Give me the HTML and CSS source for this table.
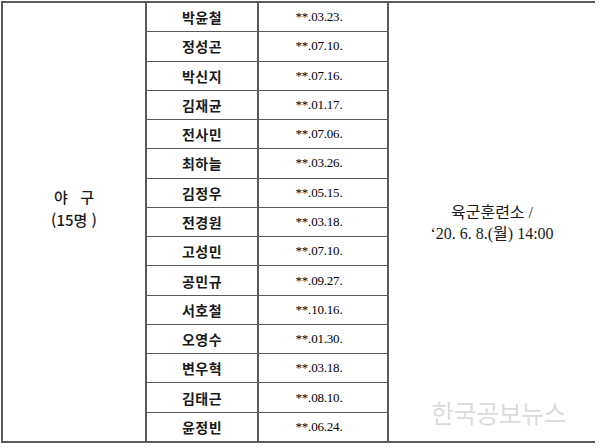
FILE: index.html
```html
<!DOCTYPE html>
<html lang="ko">
<head>
<meta charset="utf-8">
<link rel="stylesheet" href="styles.css">
</head>
<body>
<div class="table">
  <div class="cell sport">야&nbsp;&nbsp;&nbsp;구<br>(15명&nbsp;)</div>
  <div class="cell name">박윤철</div><div class="cell date">**.03.23.</div>
  <div class="cell place">육군훈련소 /<br>‘20. 6. 8.(월) 14:00</div>
  <div class="cell name">정성곤</div><div class="cell date">**.07.10.</div>
  <div class="cell name">박신지</div><div class="cell date">**.07.16.</div>
  <div class="cell name">김재균</div><div class="cell date">**.01.17.</div>
  <div class="cell name">전사민</div><div class="cell date">**.07.06.</div>
  <div class="cell name">최하늘</div><div class="cell date">**.03.26.</div>
  <div class="cell name">김정우</div><div class="cell date">**.05.15.</div>
  <div class="cell name">전경원</div><div class="cell date">**.03.18.</div>
  <div class="cell name">고성민</div><div class="cell date">**.07.10.</div>
  <div class="cell name">공민규</div><div class="cell date">**.09.27.</div>
  <div class="cell name">서호철</div><div class="cell date">**.10.16.</div>
  <div class="cell name">오영수</div><div class="cell date">**.01.30.</div>
  <div class="cell name">변우혁</div><div class="cell date">**.03.18.</div>
  <div class="cell name">김태근</div><div class="cell date">**.08.10.</div>
  <div class="cell name">윤정빈</div><div class="cell date">**.06.24.</div>
</div>
<div class="watermark">한국공보뉴스</div>
</body>
</html>
```

FILE: styles.css
```css
html, body {
  margin: 0;
  padding: 0;
  background: #fff;
}
body {
  position: relative;
  width: 600px;
  height: 448px;
  overflow: hidden;
}
.table {
  margin: 1px 0 0 1px;
  width: 594px;
  height: 442px;
  box-sizing: border-box;
  padding: 2px;
  background: #5a5a5a;
  display: grid;
  grid-template-columns: 142px 110px 128px 206px;
  grid-template-rows: repeat(15, 1fr);
  column-gap: 2px;
  row-gap: 1px;
}
.cell {
  background: #fff;
  display: flex;
  align-items: center;
  justify-content: center;
  color: #1a1a1a;
}
.sport {
  grid-row: 1 / span 15;
  grid-column: 1;
  flex-direction: column;
  font-family: "Noto Sans CJK KR", sans-serif;
  font-size: 15px;
  line-height: 23px;
  text-align: center;
  font-weight: 500;
  padding-bottom: 28px;
}
.place {
  grid-row: 1 / span 15;
  grid-column: 4;
  font-family: "Liberation Serif", "Noto Sans CJK KR", serif;
  font-size: 16px;
  line-height: 21px;
  text-align: center;
  padding-top: 2px;
}
.name {
  grid-column: 2;
  font-family: "Noto Sans CJK KR", sans-serif;
  font-weight: 700;
  font-size: 14px;
  letter-spacing: 0.5px;
}
.date {
  grid-column: 3;
  font-family: "Liberation Serif", serif;
  font-size: 13px;
  padding-right: 8px;
  letter-spacing: -0.2px;
  color: #000;
}
.watermark {
  position: absolute;
  left: 431px;
  top: 394px;
  font-family: "Noto Sans CJK KR", sans-serif;
  font-size: 25px;
  color: rgba(150, 150, 150, 0.35);
  letter-spacing: -0.5px;
}
```
